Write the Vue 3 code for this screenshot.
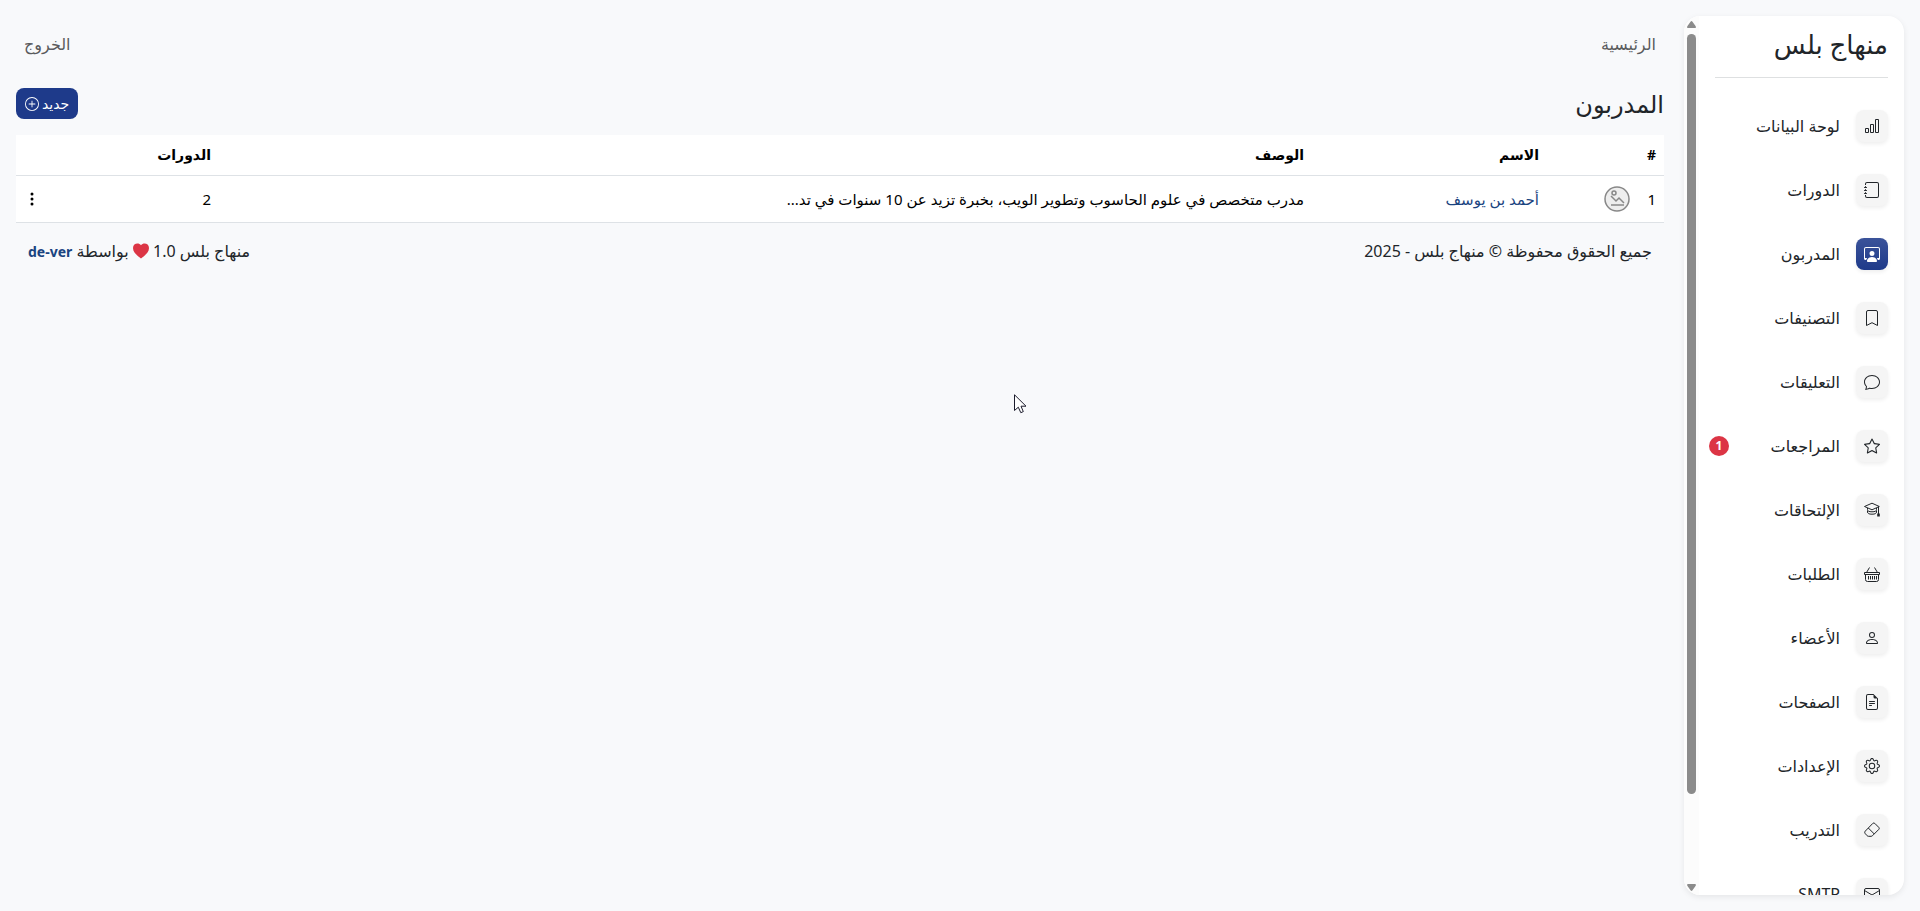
<template>
  <div class="page" dir="rtl">
    <aside class="sidebar">
      <div class="sidebar-content">
        <a href="#" class="brand">منهاج بلس</a>
        <hr class="divider" />
        <nav class="menu">
          <a
            v-for="item in menuItems"
            :key="item.label"
            href="#"
            class="menu-link"
            :class="{ active: item.active }"
          >
            <span class="menu-icon">
              <svg viewBox="0 0 16 16" fill="currentColor" aria-hidden="true">
                <path v-for="d in item.fill" :key="d" :d="d" />
                <path v-for="d in item.line" :key="d" :d="d" class="line" />
              </svg>
            </span>
            <span>{{ item.label }}</span>
            <span v-if="item.count" class="count">{{ item.count }}</span>
          </a>
        </nav>
      </div>

      <div class="scrollbar" aria-hidden="true">
        <svg viewBox="0 0 9 7"><path d="M3.5 .8Q4.500 -.6 5.500 .8L8.700 5.200Q9.300 7 8 7H1Q-.3 7 .3 5.200Z" /></svg>
        <div class="track"><div class="thumb"></div></div>
        <svg viewBox="0 0 9 7"><path d="M3.5 6.200Q4.500 7.600 5.500 6.200L8.700 1.800Q9.300 0 8 0H1Q-.3 0 .3 1.800Z" /></svg>
      </div>
    </aside>

    <main class="main">
      <nav class="topbar">
        <a href="#">الرئيسية</a>
        <a href="#">الخروج</a>
      </nav>

      <div class="page-head">
        <h1>المدربون</h1>
        <button type="button" class="new-btn">
          جديد
          <svg viewBox="0 0 16 16" fill="currentColor" aria-hidden="true">
            <path d="M8 15A7 7 0 1 1 8 1a7 7 0 0 1 0 14m0 1A8 8 0 1 0 8 0a8 8 0 0 0 0 16" />
            <path d="M8 4a.5.5 0 0 1 .5.5v3h3a.5.5 0 0 1 0 1h-3v3a.5.5 0 0 1-1 0v-3h-3a.5.5 0 0 1 0-1h3v-3A.5.5 0 0 1 8 4" />
          </svg>
        </button>
      </div>

      <table class="table">
        <thead>
          <tr>
            <th class="col-id">#</th>
            <th class="col-avatar"></th>
            <th class="col-name">الاسم</th>
            <th>الوصف</th>
            <th class="col-courses">الدورات</th>
            <th class="col-actions"></th>
          </tr>
        </thead>
        <tbody>
          <tr v-for="coach in coaches" :key="coach.id">
            <td>{{ coach.id }}</td>
            <td>
              <svg class="avatar" viewBox="0 0 26 26" aria-hidden="true">
                <circle cx="13" cy="13" r="12" fill="#eee" />
                <circle cx="10" cy="7" r="2" />
                <path d="M7 10L12 15L15 12L20 17" />
                <path d="M7 19H20" />
              </svg>
            </td>
            <td><a href="#">{{ coach.name }}</a></td>
            <td>{{ coach.description }}</td>
            <td>{{ coach.courses }}</td>
            <td>
              <button type="button" class="more-btn" aria-label="خيارات">
                <svg viewBox="0 0 16 16" fill="currentColor" aria-hidden="true">
                  <circle cx="8" cy="3" r="1.500" />
                  <circle cx="8" cy="8" r="1.500" />
                  <circle cx="8" cy="13" r="1.500" />
                </svg>
              </button>
            </td>
          </tr>
        </tbody>
      </table>

      <footer class="footer">
        <span>جميع الحقوق محفوظة © منهاج بلس - 2025</span>
        <span>
          منهاج بلس 1.0
          <svg class="heart" viewBox="0 0 16 16" aria-hidden="true">
            <path d="M8 15.500C5 13 0 10 0 5C0 0 6-.5 8 2.200C10-.5 16 0 16 5C16 10 11 13 8 15.500Z" />
          </svg>
          بواسطة
          <a href="#">de-ver</a>
        </span>
      </footer>
    </main>

    <svg class="cursor" viewBox="0 0 13 20" aria-hidden="true">
      <path d="M.5 .8V16.500L4.300 13.200L6.800 18.700L9.300 17.600L7 12.200H12Z" />
    </svg>
  </div>
</template>

<script setup>
/* SIDEBAR */
const menuItems = [
  {
    label: 'لوحة البيانات',
    fill: ['M4 11H2v3h2zm5-4H7v7h2zm5-5v12h-2V2zm-2-1a1 1 0 0 0-1 1v12a1 1 0 0 0 1 1h2a1 1 0 0 0 1-1V2a1 1 0 0 0-1-1zM6 7a1 1 0 0 1 1-1h2a1 1 0 0 1 1 1v7a1 1 0 0 1-1 1H7a1 1 0 0 1-1-1zm-5 4a1 1 0 0 1 1-1h2a1 1 0 0 1 1 1v3a1 1 0 0 1-1 1H2a1 1 0 0 1-1-1z'],
  },
  {
    label: 'الدورات',
    fill: [
      'M3 0h10a2 2 0 0 1 2 2v12a2 2 0 0 1-2 2H3a2 2 0 0 1-2-2v-1h1v1a1 1 0 0 0 1 1h10a1 1 0 0 0 1-1V2a1 1 0 0 0-1-1H3a1 1 0 0 0-1 1v1H1V2a2 2 0 0 1 2-2',
      'M1 5v-.5a.5.5 0 0 1 1 0V5h.5a.5.5 0 0 1 0 1h-2a.5.5 0 0 1 0-1zm0 3v-.5a.5.5 0 0 1 1 0V8h.5a.5.5 0 0 1 0 1h-2a.5.5 0 0 1 0-1zm0 3v-.5a.5.5 0 0 1 1 0v.5h.5a.5.5 0 0 1 0 1h-2a.5.5 0 0 1 0-1z',
    ],
  },
  {
    label: 'المدربون',
    active: true,
    fill: [
      'M4 16s-1 0-1-1 1-4 5-4 5 3 5 4-1 1-1 1zm4-5.950a2.500 2.500 0 1 0 0-5 2.500 2.500 0 0 0 0 5',
      'M2 1a2 2 0 0 0-2 2v9.500A1.500 1.500 0 0 0 1.500 14h.653a5.400 5.400 0 0 1 1.066-2H1V3a1 1 0 0 1 1-1h12a1 1 0 0 1 1 1v9h-2.219c.554.654.89 1.373 1.066 2h.653a1.500 1.500 0 0 0 1.500-1.500V3a2 2 0 0 0-2-2z',
    ],
  },
  { label: 'التصنيفات', line: ['M2.500 15.500V2A1.500 1.500 0 0 1 4 .5H12A1.500 1.500 0 0 1 13.500 2V15.500L8 12.700Z'] },
  {
    label: 'التعليقات',
    fill: ['M2.678 11.894a1 1 0 0 1 .287.801 11 11 0 0 1-.398 2c1.395-.323 2.247-.697 2.634-.893a1 1 0 0 1 .71-.074A8 8 0 0 0 8 14c3.996 0 7-2.807 7-6s-3.004-6-7-6-7 2.808-7 6c0 1.468.617 2.830 1.678 3.894m-.493 3.905a22 22 0 0 1-.713.129c-.2.032-.352-.176-.273-.362a10 10 0 0 0 .244-.637l.003-.01c.248-.72.45-1.548.524-2.319C.743 11.370 0 9.760 0 8c0-3.866 3.582-7 8-7s8 3.134 8 7-3.582 7-8 7a9 9 0 0 1-2.347-.306c-.52.263-1.639.742-3.468 1.105'],
  },
  {
    label: 'المراجعات',
    count: 1,
    fill: ['M2.866 14.850c-.078.444.36.791.746.593l4.390-2.256 4.389 2.256c.386.198.824-.149.746-.592l-.83-4.730 3.522-3.356c.33-.314.16-.888-.282-.95l-4.898-.696L8.465.792a.513.513 0 0 0-.927 0L5.354 5.120l-4.898.696c-.441.062-.612.636-.283.95l3.523 3.356-.83 4.730zm4.905-2.767-3.686 1.894.694-3.957a.56.56 0 0 0-.163-.505L1.710 6.745l4.052-.576a.53.53 0 0 0 .393-.288L8 2.223l1.847 3.658a.53.53 0 0 0 .393.288l4.052.575-2.906 2.770a.56.56 0 0 0-.163.506l.694 3.957-3.686-1.894a.5.5 0 0 0-.461 0z'],
  },
  {
    label: 'الإلتحاقات',
    fill: ['M13.200 11.500h2.600v3h-2.600z'],
    line: ['M.5 4.500L8 1.200L15.300 4.500L8 7.800Z', 'M3.500 6V7.500Q3.500 9.800 8 9.800Q12.500 9.800 12.500 7.500V6', 'M3.500 8.500V10Q3.500 12.200 8 12.200Q12.500 12.200 12.500 10V8.500', 'M14.500 4.500V12'],
  },
  {
    label: 'الطلبات',
    line: ['M.5 6.500H15.500V8.500H.5Z', 'M1.500 8.500V13.500Q1.500 15.500 3.500 15.500H12.500Q14.500 15.500 14.500 13.500V8.500', 'M5.500 1.500L2.500 6.500', 'M10.500 1.500L13.500 6.500', 'M4.500 10V13.500M6.500 10V13.500M8.500 10V13.500M10.500 10V13.500M12.500 10V13.500'],
  },
  {
    label: 'الأعضاء',
    fill: ['M8 8a3 3 0 1 0 0-6 3 3 0 0 0 0 6m2-3a2 2 0 1 1-4 0 2 2 0 0 1 4 0m4 8c0 1-1 1-1 1H3s-1 0-1-1 1-4 6-4 6 3 6 4m-1-.004c-.001-.246-.154-.986-.832-1.664C11.516 10.680 10.289 10 8 10s-3.516.68-4.168 1.332c-.678.678-.83 1.418-.832 1.664z'],
  },
  {
    label: 'الصفحات',
    fill: [
      'M5.500 7a.5.5 0 0 0 0 1h5a.5.5 0 0 0 0-1zM5 9.500a.5.5 0 0 1 .5-.5h5a.5.5 0 0 1 0 1h-5a.5.5 0 0 1-.5-.5m0 2a.5.5 0 0 1 .5-.5h2a.5.5 0 0 1 0 1h-2a.5.5 0 0 1-.5-.5',
      'M9.500 0H4a2 2 0 0 0-2 2v12a2 2 0 0 0 2 2h8a2 2 0 0 0 2-2V4.500zm0 1v2A1.500 1.500 0 0 0 11 4.500h2V14a1 1 0 0 1-1 1H4a1 1 0 0 1-1-1V2a1 1 0 0 1 1-1z',
    ],
  },
  {
    label: 'الإعدادات',
    fill: [
      'M8 4.754a3.246 3.246 0 1 0 0 6.492 3.246 3.246 0 0 0 0-6.492M5.754 8a2.246 2.246 0 1 1 4.492 0 2.246 2.246 0 0 1-4.492 0',
      'M9.796 1.343c-.527-1.790-3.065-1.790-3.592 0l-.094.319a.873.873 0 0 1-1.255.52l-.292-.16c-1.640-.892-3.433.902-2.540 2.541l.159.292a.873.873 0 0 1-.52 1.255l-.319.094c-1.790.527-1.790 3.065 0 3.592l.319.094a.873.873 0 0 1 .52 1.255l-.16.292c-.892 1.640.901 3.434 2.541 2.540l.292-.159a.873.873 0 0 1 1.255.52l.094.319c.527 1.790 3.065 1.790 3.592 0l.094-.319a.873.873 0 0 1 1.255-.52l.292.16c1.640.893 3.434-.902 2.540-2.541l-.159-.292a.873.873 0 0 1 .52-1.255l.319-.094c1.790-.527 1.790-3.065 0-3.592l-.319-.094a.873.873 0 0 1-.52-1.255l.16-.292c.893-1.640-.902-3.433-2.541-2.540l-.292.159a.873.873 0 0 1-1.255-.52zm-2.633.283c.246-.835 1.428-.835 1.674 0l.094.319a1.873 1.873 0 0 0 2.693 1.115l.291-.16c.764-.415 1.600.42 1.184 1.185l-.159.292a1.873 1.873 0 0 0 1.116 2.692l.318.094c.835.246.835 1.428 0 1.674l-.319.094a1.873 1.873 0 0 0-1.115 2.693l.16.291c.415.764-.42 1.600-1.185 1.184l-.291-.159a1.873 1.873 0 0 0-2.693 1.116l-.094.318c-.246.835-1.428.835-1.674 0l-.094-.319a1.873 1.873 0 0 0-2.692-1.115l-.292.16c-.764.415-1.600-.42-1.184-1.185l.159-.291A1.873 1.873 0 0 0 1.945 8.930l-.319-.094c-.835-.246-.835-1.428 0-1.674l.319-.094A1.873 1.873 0 0 0 3.060 4.377l-.16-.292c-.415-.764.42-1.600 1.185-1.184l.292.159a1.873 1.873 0 0 0 2.692-1.115z',
    ],
  },
  { label: 'التدريب', line: ['M8.800 1.400Q9.800 .5 10.800 1.400L14.800 5.400Q15.700 6.400 14.800 7.400L8.600 13.600Q7.900 14.300 7 14.300H4.500Q3.700 14.300 3.100 13.700L1 11.300Q.3 10.300 1.200 9.200Z', 'M4.300 6L10.300 12'] },
  { label: 'SMTP', line: ['M2 2.500H14Q15.500 2.500 15.500 4V12Q15.500 13.500 14 13.500H2Q.5 13.500 .5 12V4Q.5 2.500 2 2.500Z', 'M.5 4.500L8 9L15.500 4.500'] },
]

/* TABLE */
const coaches = [
  {
    id: 1,
    name: 'أحمد بن يوسف',
    description: 'مدرب متخصص في علوم الحاسوب وتطوير الويب، بخبرة تزيد عن 10 سنوات في تد...',
    courses: 2,
  },
]
</script>

<style>
body {
  margin: 0;
  background: #f8f9fb;
}
</style>

<style scoped>
.page {
  display: flex;
  gap: 20px;
  height: 100vh;
  padding: 16px;
  box-sizing: border-box;
  font-family: "Noto Sans", "DejaVu Sans", sans-serif;
  font-size: 16px;
  line-height: 24px;
  color: #212529;
}

a {
  color: #1a4480;
  text-decoration: none;
}

.sidebar {
  display: flex;
  flex: none;
  width: 220px;
  background: #fff;
  border-radius: 16px;
  box-shadow: 0 2px 6px rgba(0, 0, 0, 0.08);
  overflow: hidden;
}

.sidebar-content {
  flex: 1;
  padding: 12px 16px;
  overflow: hidden;
}

.brand {
  display: block;
  font-size: 26px;
  line-height: 32px;
  color: #212529;
}

.divider {
  margin: 17px 0 32px;
  border: 0;
  border-top: 1px solid #dee0e1;
}

.menu {
  display: flex;
  flex-direction: column;
  gap: 32px;
}

.menu-link {
  position: relative;
  display: flex;
  flex: none;
  align-items: center;
  gap: 16px;
  color: #212529;
}

.menu-icon {
  display: flex;
  align-items: center;
  justify-content: center;
  width: 32px;
  height: 32px;
  background: #f5f5f5;
  border-radius: 8px;
  box-shadow: 0 2px 4px rgba(0, 0, 0, 0.07);
}

.menu-icon svg {
  width: 16px;
  height: 16px;
}

.line {
  fill: none;
  stroke: currentColor;
  stroke-linejoin: round;
}

.active .menu-icon {
  color: #fff;
  background: linear-gradient(#3b539a, #1e3a8a);
}

.count {
  position: absolute;
  left: -6px;
  width: 20px;
  border-radius: 10px;
  background: #dc3545;
  color: #fff;
  font-size: 12px;
  line-height: 20px;
  font-weight: 700;
  text-align: center;
}

.scrollbar {
  display: flex;
  flex-direction: column;
  align-items: center;
  gap: 6px;
  width: 15px;
  padding: 5px 0 4px;
  box-sizing: border-box;
  background: #fcfcfc;
}

.scrollbar svg {
  width: 9px;
  height: 7px;
  fill: #8b8b8b;
}

.track {
  flex: 1;
}

.thumb {
  width: 9px;
  height: 90%;
  border-radius: 5px;
  background: #8b8b8b;
}

.main {
  flex: 1;
  min-width: 0;
}

.topbar {
  display: flex;
  justify-content: space-between;
  padding: 16px 8px;
}

.topbar a {
  color: #5a5b5d;
}

.page-head {
  display: flex;
  align-items: center;
  justify-content: space-between;
  margin: 16px 0;
}

.page-head h1 {
  margin: 0;
  font-size: 24px;
  line-height: 31px;
  font-weight: 400;
}

.new-btn {
  display: flex;
  align-items: center;
  gap: 3px;
  height: 31px;
  padding: 0 9px;
  border: 0;
  border-radius: 8px;
  background: #1e3a8a;
  color: #fff;
  font: inherit;
  font-size: 14px;
}

.new-btn svg {
  width: 14px;
  height: 14px;
}

.table {
  width: 100%;
  table-layout: fixed;
  border-collapse: collapse;
  background: #fff;
  color: #000;
}

.table th,
.table td {
  height: 24px;
  padding: 8px;
  border-bottom: 1px solid #dee2e6;
  font-size: 14px;
  text-align: right;
  white-space: nowrap;
}

.table td {
  height: 30px;
  font-size: 15px;
}

.col-id {
  width: 10px;
}

.col-avatar {
  width: 75px;
}

.col-name {
  width: 219px;
}

.col-courses {
  width: 147px;
}

.col-actions {
  width: 24px;
}

.avatar {
  display: block;
  width: 26px;
  height: 26px;
  fill: none;
  stroke: #888;
  stroke-width: 1.5;
}

.more-btn {
  display: block;
  margin-right: auto;
  padding: 0;
  border: 0;
  background: none;
  color: #000;
}

.more-btn svg {
  display: block;
  width: 16px;
  height: 16px;
}

.footer {
  display: flex;
  justify-content: space-between;
  padding: 16px 12px;
}

.footer a {
  font-size: 14px;
  font-weight: 700;
}

.heart {
  width: 16px;
  height: 16px;
  fill: #dc3545;
  vertical-align: -2px;
}

.cursor {
  position: absolute;
  top: 394px;
  left: 1014px;
  width: 13px;
  height: 20px;
  fill: #fff;
  stroke: #1b1b2b;
  pointer-events: none;
}
</style>
